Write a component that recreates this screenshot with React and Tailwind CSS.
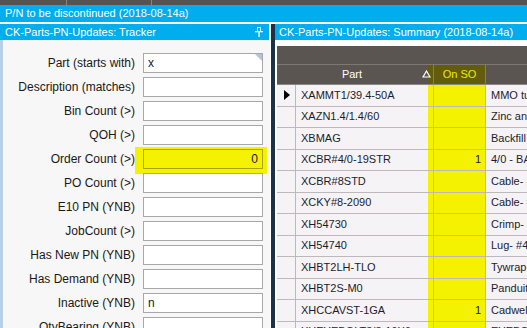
import React from "react";

const fields = [
  { label: "Part (starts with)", value: "x", dropdown: true },
  { label: "Description (matches)" },
  { label: "Bin Count (>)" },
  { label: "QOH (>)" },
  { label: "Order Count (>)", value: "0", highlight: true },
  { label: "PO Count (>)" },
  { label: "E10 PN (YNB)" },
  { label: "JobCount (>)" },
  { label: "Has New PN (YNB)" },
  { label: "Has Demand (YNB)" },
  { label: "Inactive (YNB)", value: "n" },
  { label: "QtyBearing (YNB)" },
];

const rows = [
  { part: "XAMMT1/39.4-50A", so: "", desc: "MMO tubular anode", current: true },
  { part: "XAZN1.4/1.4/60", so: "", desc: "Zinc anode 1.4" },
  { part: "XBMAG", so: "", desc: "Backfill mag" },
  { part: "XCBR#4/0-19STR", so: "1", desc: "4/0 - BARE" },
  { part: "XCBR#8STD", so: "", desc: "Cable- #8" },
  { part: "XCKY#8-2090", so: "", desc: "Cable- #8" },
  { part: "XH54730", so: "", desc: "Crimp- lug" },
  { part: "XH54740", so: "", desc: "Lug- #4" },
  { part: "XHBT2LH-TLO", so: "", desc: "Tywrap" },
  { part: "XHBT2S-M0", so: "", desc: "Panduit" },
  { part: "XHCCAVST-1GA", so: "1", desc: "Cadweld" },
  { part: "XHEYEBOLT3/8-16X6", so: "", desc: "EYEBOLT" },
];

function Pin() {
  return (
    <svg width="8" height="10" viewBox="0 0 8 10" className="block">
      <rect x="2.5" y="0.5" width="3" height="4" fill="none" stroke="white" strokeWidth="1" />
      <rect x="0" y="4" width="8" height="1.3" fill="white" />
      <rect x="3.4" y="5" width="1.3" height="5" fill="white" />
    </svg>
  );
}

export default function App() {
  return (
    <div
      className="w-[527px] h-[328px] overflow-hidden bg-white flex flex-col text-[12px] leading-none"
      style={{ fontFamily: '"Liberation Sans", Arial, sans-serif' }}
    >
      {/* top dark strip */}
      <div className="h-[5px] bg-[#58534f] flex shrink-0">
        <div className="w-[67px] border-r border-[#8a8480]" />
        <div className="w-[85px] border-r border-[#8a8480]" />
      </div>
      {/* main title bar */}
      <div className="h-[17px] bg-[#00adef] text-white text-[11px] flex items-center pl-[5px] shrink-0">
        P/N to be discontinued (2018-08-14a)
      </div>
      <div className="h-[2px] bg-white shrink-0" />

      <div className="flex flex-1 min-h-0">
        {/* left panel */}
        <div className="w-[270px] flex flex-col shrink-0">
          <div className="h-[16px] bg-[#00adef] text-white text-[11px] flex items-center justify-between pl-[5px] pr-[6px] mr-[1px] shrink-0">
            <span>CK-Parts-PN-Updates: Tracker</span>
            <Pin />
          </div>
          <div className="flex flex-1 min-h-0">
            <div className="w-[3px] bg-[#b9cfe9] shrink-0" />
            <div className="flex-1 bg-[#f7f7f7] pt-[13px] flex flex-col gap-[4px] overflow-hidden">
              {fields.map((f) => (
                <div key={f.label} className="flex items-center h-[20px] shrink-0">
                  <div className="w-[132px] text-right text-[#201818]">{f.label}</div>
                  <div className="relative ml-[8px] w-[120px] h-[20px]">
                    {f.highlight && (
                      <div className="absolute -left-[8px] -right-[4px] -top-[2px] -bottom-[5px] bg-[#f5f200]" />
                    )}
                    <div
                      className={
                        "relative w-full h-full border flex items-center px-[4px] text-[#1a1a1a] " +
                        (f.highlight
                          ? "bg-[#f5f200] border-[#a8a600] justify-end"
                          : "bg-white border-[#a8a8a8]")
                      }
                    >
                      {f.value}
                      {f.dropdown && (
                        <div className="absolute right-0 top-0 w-0 h-0 border-l-[7px] border-l-transparent border-t-[7px] border-t-[#b4c4dc]" />
                      )}
                    </div>
                  </div>
                </div>
              ))}
            </div>
          </div>
        </div>

        {/* divider */}
        <div className="w-[1px] bg-white shrink-0" />
        <div className="w-[4px] bg-[#1b3248] shrink-0" />

        {/* right panel */}
        <div className="flex-1 flex flex-col min-w-0 text-[11px]">
          <div className="h-[16px] bg-[#00adef] text-white flex items-center pl-[4px] shrink-0 whitespace-nowrap overflow-hidden">
            CK-Parts-PN-Updates: Summary (2018-08-14a)
          </div>
          <div className="flex-1 flex flex-col bg-white pt-[6px] pl-[2px] min-h-0">
            <div className="h-[19px] bg-[#5a5551] border-b border-[#7d7874] shrink-0" />
            {/* header row */}
            <div className="h-[20px] flex bg-[#5a5551] text-white shrink-0 border-b border-[#8c8884]">
              <div className="w-[19px] shrink-0" />
              <div className="w-[137px] shrink-0 flex relative">
                <div className="flex-1 flex items-center justify-center pr-[20px]">Part</div>
                <div className="w-[5px] bg-[#625c0c]" />
                <svg width="9" height="8" viewBox="0 0 9 8" className="absolute right-[2px] top-[5px]">
                  <path d="M4.5 1 L8 7 L1 7 Z" fill="none" stroke="white" strokeWidth="1.2" />
                </svg>
              </div>
              <div className="w-[53px] shrink-0 bg-[#625c0c] border-l border-r border-[#8a8530] flex items-center justify-center text-[#f0ea00]">
                On SO
              </div>
              <div className="flex-1" />
            </div>
            {/* data rows */}
            <div className="flex-1 overflow-hidden bg-[#f6f3f7]">
              {rows.map((r) => (
                <div key={r.part} className="h-[21.5px] flex border-b border-[#bcb8bc] text-[#1c1c2c]">
                  <div className="w-[19px] shrink-0 border-r border-[#bcb8bc] flex items-center justify-center">
                    {r.current && (
                      <svg width="6" height="10" viewBox="0 0 6 10" className="ml-[2px]">
                        <path d="M0 0 L6 5 L0 10 Z" fill="black" />
                      </svg>
                    )}
                  </div>
                  <div className="w-[137px] shrink-0 flex">
                    <div className="flex-1 flex items-center pl-[5px] whitespace-nowrap overflow-hidden">{r.part}</div>
                    <div className="w-[5px] bg-[#f5f200]" />
                  </div>
                  <div className="w-[53px] shrink-0 bg-[#f5f200] border-l border-r border-[#bcb8bc] flex items-center justify-end pr-[4px]">
                    {r.so}
                  </div>
                  <div className="flex-1 flex items-center pl-[5px] whitespace-nowrap overflow-hidden">{r.desc}</div>
                </div>
              ))}
            </div>
          </div>
        </div>
      </div>
    </div>
  );
}
